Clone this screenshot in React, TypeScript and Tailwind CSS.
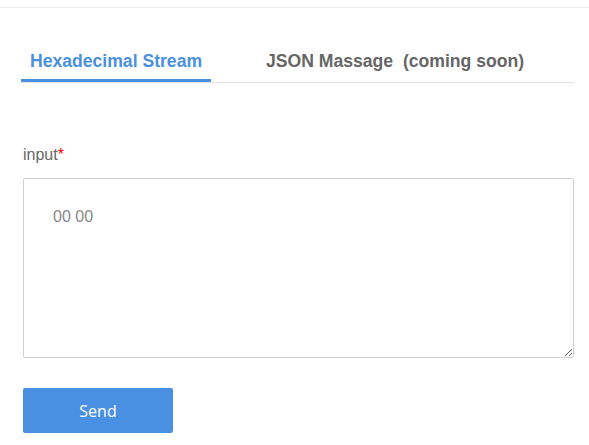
export default function App() {
  return (
    <div className="w-[589px] h-[445px] bg-white overflow-hidden" style={{ fontFamily: '"Liberation Sans", Arial, sans-serif' }}>
      <div className="h-[8px] border-b border-[#ececec]" />
      <div className="pl-[21px] pr-[15px]">
        <div className="flex items-end border-b border-[#e2e2e2]">
          <div className="mt-[43px] w-[190px] pb-[8px] border-b-[3px] border-[#4a90e2] text-center text-[17.6px] leading-[20px] font-bold text-[#4a90e2]">
            Hexadecimal Stream
          </div>
          <div className="ml-[55px] pb-[11px] text-[17.6px] leading-[20px] font-bold text-[#666]">
            JSON Massage&nbsp; (coming soon)
          </div>
        </div>
      </div>
      <div className="pl-[23px] pr-[15px]">
        <div className="mt-[63px] text-[16px] leading-[18px] text-[#666]">
          input<span className="text-[#f00]">*</span>
        </div>
        <textarea
          className="mt-[14px] block w-[551px] h-[180px] border border-[#d0d0d0] rounded-[2px] pl-[29px] pt-[26px] text-[16px] text-[#888] outline-none"
          style={{ fontFamily: '"Liberation Sans", Arial, sans-serif' }}
          defaultValue="00 00"
        />
        <button
          className="mt-[30px] w-[150px] h-[45px] bg-[#4a90e2] rounded-[2px] text-white text-[16px]"
          style={{ fontFamily: '"Open Sans", sans-serif' }}
        >
          Send
        </button>
      </div>
    </div>
  );
}
